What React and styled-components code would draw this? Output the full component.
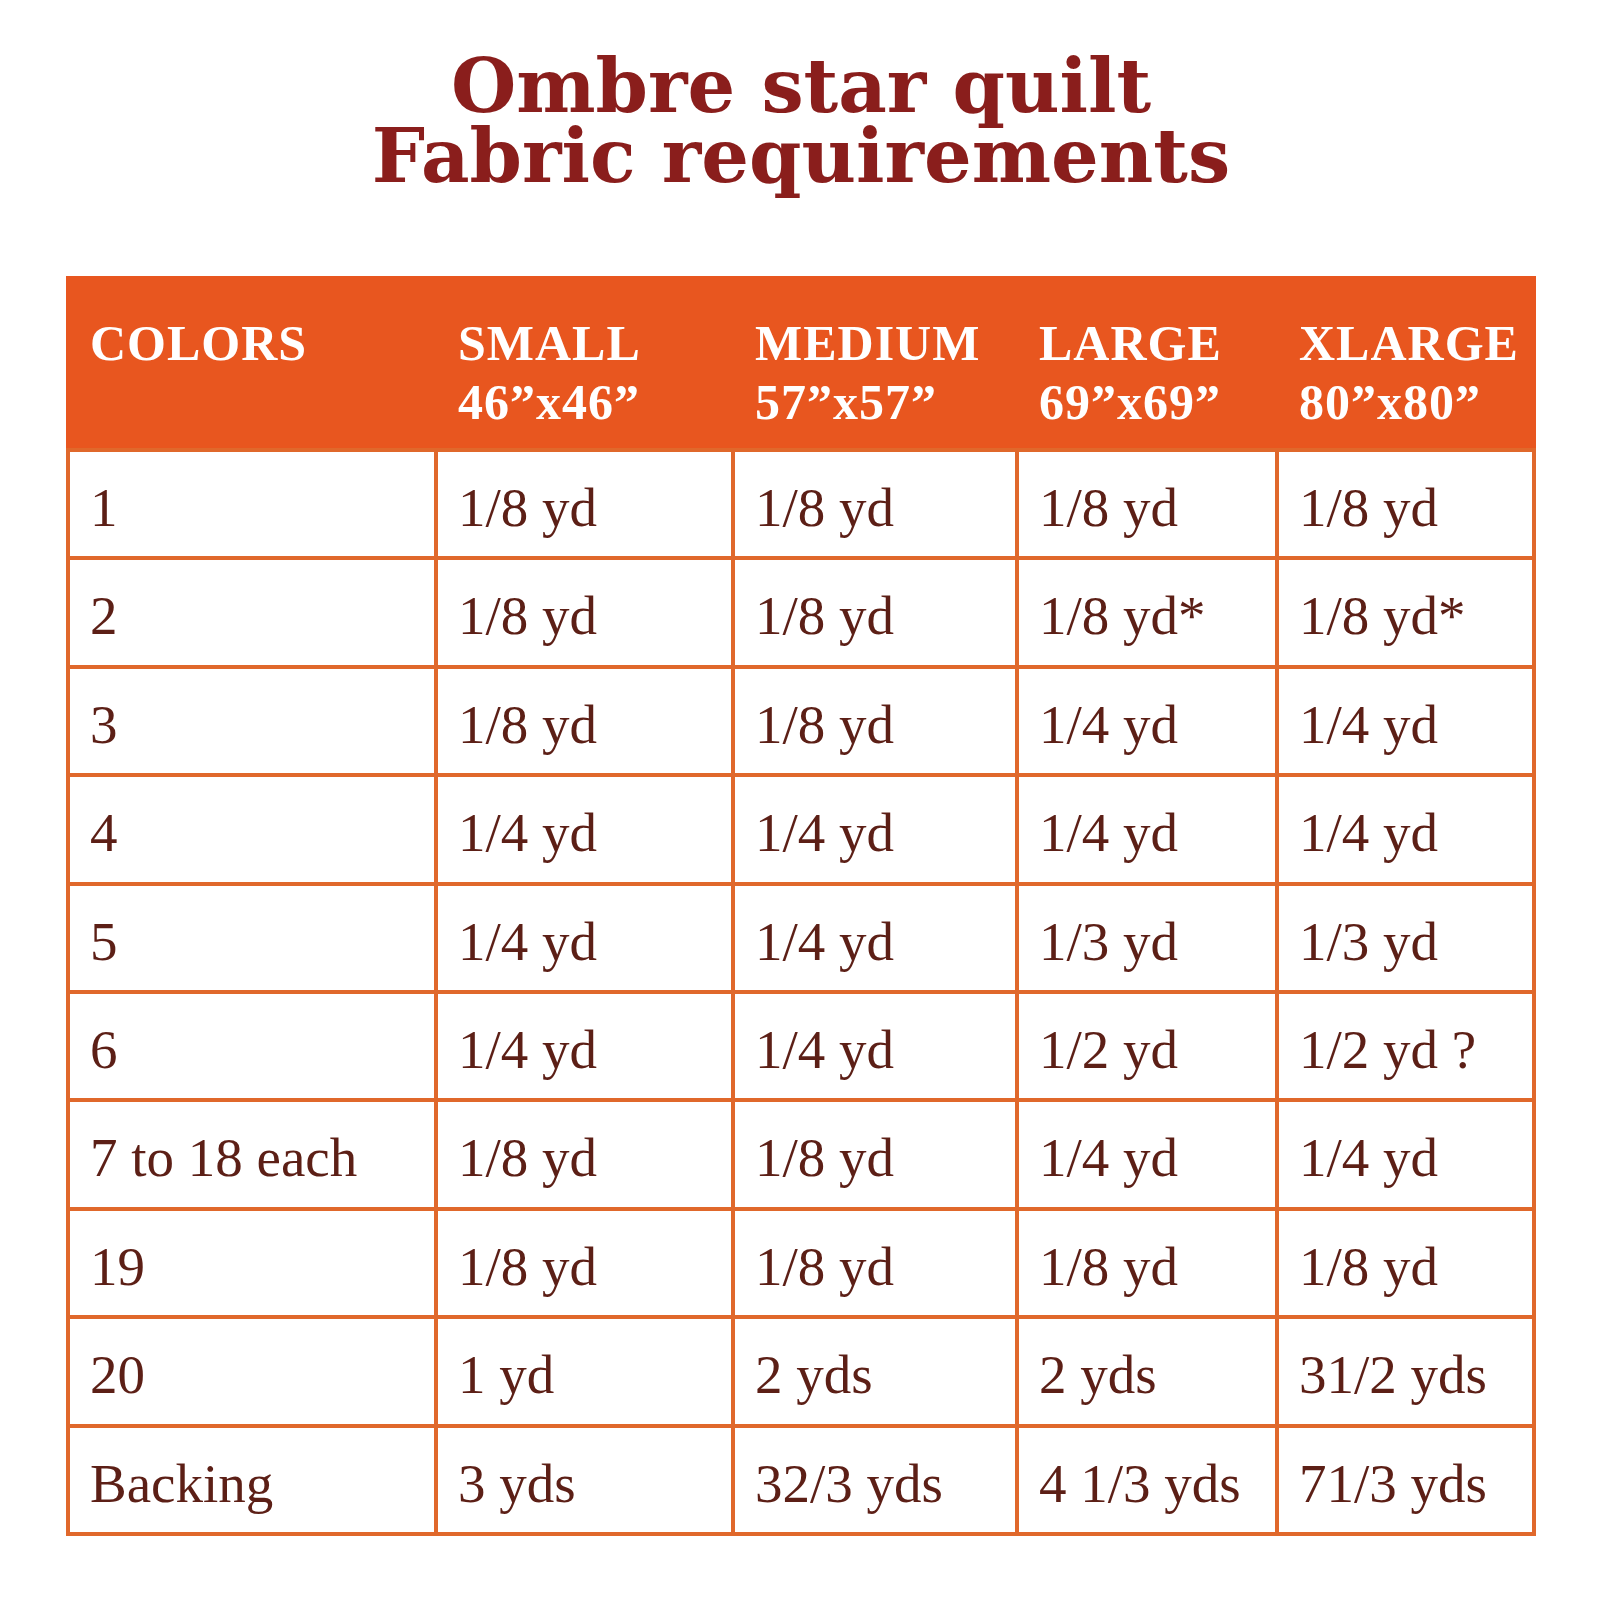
import React from 'react'
import styled, { createGlobalStyle } from 'styled-components'

const GlobalStyle = createGlobalStyle`
  html, body {
    margin: 0;
    padding: 0;
    background: #ffffff;
  }
`

const Page = styled.div`
  width: 1470px;
  margin-left: 66px;
  padding-top: 51px;
`

const Title = styled.h1`
  margin: 0 0 85px 0;
  text-align: center;
  font-family: "DejaVu Serif", serif;
  font-weight: bold;
  font-size: 75px;
  line-height: 70px;
  color: #8a1e1c;
`

const TitleLine = styled.span`
  display: block;
`

const Table = styled.div`
  width: 100%;
`

const columns = '364px 293px 280px 256px 253px'

const Header = styled.div`
  display: grid;
  grid-template-columns: ${columns};
  column-gap: 4px;
  padding: 38px 4px 0 4px;
  height: 172px;
  box-sizing: border-box;
  background: #e8561f;
`

const HeadCell = styled.div`
  padding-left: 20px;
  font-family: "Liberation Serif", serif;
  font-weight: bold;
  font-size: 50px;
  line-height: 59px;
  letter-spacing: 1px;
  color: #ffffff;
  white-space: nowrap;
`

const Body = styled.div`
  display: grid;
  grid-template-columns: ${columns};
  grid-auto-rows: 104.4px;
  gap: 4px;
  padding: 4px;
  background: #e0682b;
`

const Cell = styled.div`
  background: #ffffff;
  padding: 8px 0 0 20px;
  box-sizing: border-box;
  font-family: "Liberation Serif", serif;
  font-size: 55px;
  line-height: 96px;
  color: #5c1f16;
  white-space: nowrap;
`

const headers = [
  ['COLORS', ''],
  ['SMALL', '46”x46”'],
  ['MEDIUM', '57”x57”'],
  ['LARGE', '69”x69”'],
  ['XLARGE', '80”x80”'],
]

const rows = [
  ['1', '1/8 yd', '1/8 yd', '1/8 yd', '1/8 yd'],
  ['2', '1/8 yd', '1/8 yd', '1/8 yd*', '1/8 yd*'],
  ['3', '1/8 yd', '1/8 yd', '1/4 yd', '1/4 yd'],
  ['4', '1/4 yd', '1/4 yd', '1/4 yd', '1/4 yd'],
  ['5', '1/4 yd', '1/4 yd', '1/3 yd', '1/3 yd'],
  ['6', '1/4 yd', '1/4 yd', '1/2 yd', '1/2 yd ?'],
  ['7 to 18 each', '1/8 yd', '1/8 yd', '1/4 yd', '1/4 yd'],
  ['19', '1/8 yd', '1/8 yd', '1/8 yd', '1/8 yd'],
  ['20', '1 yd', '2 yds', '2 yds', '31/2 yds'],
  ['Backing', '3 yds', '32/3 yds', '4 1/3 yds', '71/3 yds'],
]

export default function App() {
  return (
    <Page>
      <GlobalStyle />
      <Title>
        <TitleLine>Ombre star quilt</TitleLine>
        <TitleLine>Fabric requirements</TitleLine>
      </Title>
      <Table>
        <Header>
          {headers.map(([name, size]) => (
            <HeadCell key={name}>
              {name}
              <br />
              {size}
            </HeadCell>
          ))}
        </Header>
        <Body>
          {rows.map((row, i) =>
            row.map((val, j) => <Cell key={i + '-' + j}>{val}</Cell>)
          )}
        </Body>
      </Table>
    </Page>
  )
}
